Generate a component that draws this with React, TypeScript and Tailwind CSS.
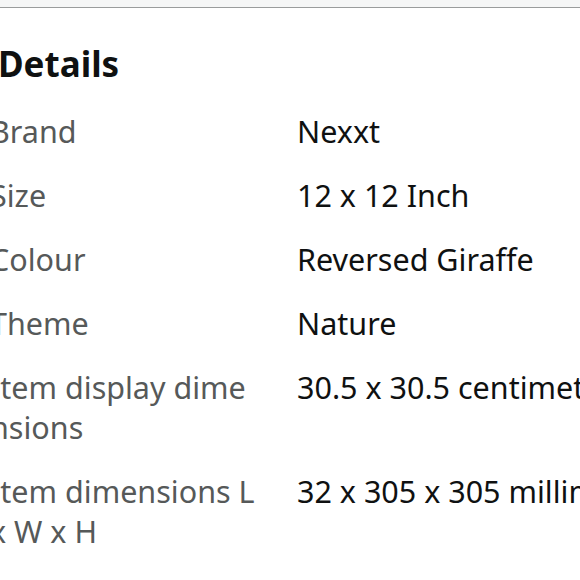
import React from "react";

const rows: [string, string][] = [
  ["Brand", "Nexxt"],
  ["Size", "12 x 12 Inch"],
  ["Colour", "Reversed Giraffe"],
  ["Theme", "Nature"],
  ["Item display dimensions", "30.5 x 30.5 centimetres"],
  ["Item dimensions L x W x H", "32 x 305 x 305 millimetres"],
];

export default function App() {
  return (
    <div
      className="w-[580px] h-[580px] overflow-hidden bg-white"
      style={{ fontFamily: '"Noto Sans", "Open Sans", sans-serif' }}
    >
      <div className="h-[7px] bg-[#f5f6f6]" />
      <div className="h-px bg-[#9a9c9c]" />
      <div className="-ml-[10px] pt-[36px]">
        <h2 className="pl-[8px] text-[35px] font-bold leading-[40px] text-[#0f1111] whitespace-nowrap">
          Details
        </h2>
        <div className="mt-[27px] grid grid-cols-[268px_1fr] gap-x-[39px] gap-y-[24px]">
          {rows.map(([k, v]) => (
            <React.Fragment key={k}>
              <div className="text-[30.5px] leading-[40px] text-[#565959] break-all">{k}</div>
              <div className="text-[30.5px] leading-[40px] text-[#0f1111] whitespace-nowrap">{v}</div>
            </React.Fragment>
          ))}
        </div>
      </div>
    </div>
  );
}
